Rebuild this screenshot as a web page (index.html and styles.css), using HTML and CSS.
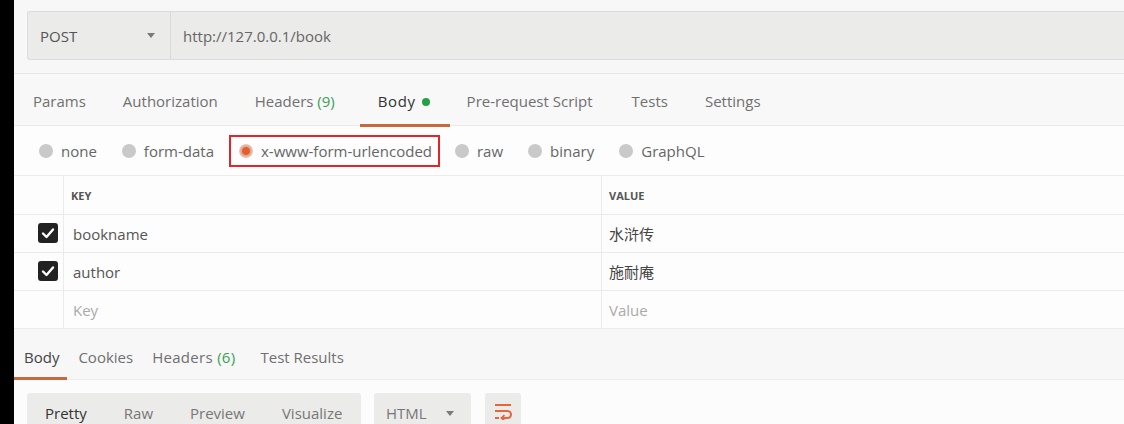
FILE: index.html
```html
<!DOCTYPE html>
<html>
<head>
<meta charset="utf-8">
<link rel="stylesheet" href="styles.css">
</head>
<body>
<div class="side"></div>
<div class="main">
  <div class="urlrow">
    <div class="urlbar">
      <div class="method"><span>POST</span><span class="caret"></span></div>
      <div class="url">http://127.0.0.1/book</div>
    </div>
  </div>
  <div class="tabs">
    <span class="tab">Params</span>
    <span class="tab">Authorization</span>
    <span class="tab">Headers <span class="green">(9)</span></span>
    <span class="tab active">Body<span class="dot"></span></span>
    <span class="tab">Pre-request Script</span>
    <span class="tab">Tests</span>
    <span class="tab">Settings</span>
  </div>
  <div class="types">
    <label class="type"><span class="radio"></span>none</label>
    <label class="type"><span class="radio"></span>form-data</label>
    <label class="type selected"><span class="radio on"></span>x-www-form-urlencoded</label>
    <label class="type"><span class="radio"></span>raw</label>
    <label class="type"><span class="radio"></span>binary</label>
    <label class="type"><span class="radio"></span>GraphQL</label>
  </div>
  <div class="table">
    <div class="row head">
      <div class="c0"></div>
      <div class="c1">KEY</div>
      <div class="c2">VALUE</div>
    </div>
    <div class="row">
      <div class="c0"><span class="check"><svg viewBox="0 0 20 20" width="20" height="20"><path d="M5 10.5 L8.5 14 L15 6.5" fill="none" stroke="#fff" stroke-width="2.4" stroke-linecap="round" stroke-linejoin="round"/></svg></span></div>
      <div class="c1">bookname</div>
      <div class="c2">水浒传</div>
    </div>
    <div class="row">
      <div class="c0"><span class="check"><svg viewBox="0 0 20 20" width="20" height="20"><path d="M5 10.5 L8.5 14 L15 6.5" fill="none" stroke="#fff" stroke-width="2.4" stroke-linecap="round" stroke-linejoin="round"/></svg></span></div>
      <div class="c1">author</div>
      <div class="c2">施耐庵</div>
    </div>
    <div class="row">
      <div class="c0"></div>
      <div class="c1 ph">Key</div>
      <div class="c2 ph">Value</div>
    </div>
  </div>
  <div class="rtabs">
    <span class="rtab active">Body</span>
    <span class="rtab">Cookies</span>
    <span class="rtab">Headers <span class="green">(6)</span></span>
    <span class="rtab">Test Results</span>
  </div>
  <div class="toolbar">
    <div class="modes">
      <span class="mode cur">Pretty</span>
      <span class="mode">Raw</span>
      <span class="mode">Preview</span>
      <span class="mode">Visualize</span>
    </div>
    <div class="fmt"><span>HTML</span><span class="caret"></span></div>
    <div class="wrap">
      <svg viewBox="0 0 20 18" width="20" height="18"><path d="M2 3 H18 M2 9 H14.5 A3.5 3.5 0 0 1 14.5 16 H10 M2 16 H6" fill="none" stroke="#e8643a" stroke-width="2"/><path d="M11.5 13.2 L8.5 16 L11.5 18.8" fill="none" stroke="#e8643a" stroke-width="1.8"/></svg>
    </div>
  </div>
</div>
</body>
</html>
```
FILE: styles.css
```css
* { box-sizing: border-box; }
html, body { margin: 0; padding: 0; }
body {
  width: 1124px;
  height: 424px;
  overflow: hidden;
  display: flex;
  background: #f7f7f7;
  font-family: "Open Sans", "Noto Sans CJK SC", sans-serif;
  font-size: 15px;
  color: #555;
}
.side { width: 14px; flex: none; background: #000; }
.main { flex: 1; min-width: 0; display: flex; flex-direction: column; }
.main > * { flex: none; }

.urlrow {
  height: 74px;
  padding: 11px 0 0 13px;
  border-bottom: 1px solid #e8e8e8;
  background: #f7f7f7;
}
.urlbar {
  height: 49px;
  display: flex;
  background: #ebebea;
  border: 1px solid #dcdcdc;
  border-right: none;
  border-radius: 3px 0 0 3px;
}
.method {
  width: 143px;
  flex: none;
  display: flex;
  align-items: center;
  justify-content: space-between;
  padding: 0 15px 0 12px;
  border-right: 1px solid #dadada;
  color: #555;
}
.caret {
  width: 0; height: 0;
  border-left: 4.5px solid transparent;
  border-right: 4.5px solid transparent;
  border-top: 5px solid #7a7a7a;
}
.url { display: flex; align-items: center; padding-left: 12px; color: #666; }

.tabs {
  height: 52px;
  display: flex;
  align-items: center;
  padding-left: 19px;
  background: #f8f8f8;
  border-bottom: 1px solid #e9e9e9;
}
.tab { margin-right: 37px; color: #707070; position: relative; height: 52px; line-height: 55px; white-space: nowrap; }
.tab.active { color: #333; padding-left: 6px; letter-spacing: 0.6px; }
.tab:nth-child(5) { margin-right: 39px; }
.tab.active::after {
  content: "";
  position: absolute;
  left: -12px; right: -20px; bottom: -1px;
  height: 3px;
  background: #c9683f;
}
.green { color: #3a9f55; }
.dot {
  display: inline-block;
  width: 8px; height: 8px;
  border-radius: 50%;
  background: #26a046;
  margin-left: 6px;
  vertical-align: 1px;
}

.types {
  height: 50px;
  display: flex;
  align-items: center;
  padding-left: 25px;
  background: #fdfdfd;
  border-bottom: 1px solid #ececec;
}
.type {
  display: flex;
  align-items: center;
  margin-right: 25px;
  color: #666;
  white-space: nowrap;
}
.radio {
  width: 14px; height: 14px;
  border-radius: 50%;
  background: #c9c9c9;
  margin-right: 8px;
}
.radio.on {
  background: radial-gradient(circle, #e55f2c 0 3.5px, #eba586 4.5px, #d9cfcb 7px);
}
.type.selected {
  border: 2px solid #e3242b;
  height: 32px;
  padding: 0 6px 0 8px;
  margin-left: -10px;
  margin-right: 15px;
}

.table { background: #fdfdfd; }
.row {
  display: flex;
  height: 38px;
  border-bottom: 1px solid #ebebeb;
}
.row.head { height: 39px; }
.c0 {
  width: 50px; flex: none;
  border-right: 1px solid #ebebeb;
  display: flex; align-items: center; justify-content: flex-end;
  padding-right: 5px;
}
.c1 {
  width: 538px; flex: none;
  border-right: 1px solid #ebebeb;
  display: flex; align-items: center;
  padding-left: 9px;
  color: #555;
}
.c2 { flex: 1; display: flex; align-items: center; padding-left: 7px; color: #444; }
.head .c1, .head .c2 { font-size: 11px; font-weight: 700; color: #555; }
.head .c1 { padding-left: 7px; }
.ph { color: #aaa; }
.check {
  width: 20px; height: 20px;
  border-radius: 3px;
  background: #222;
  display: block;
  margin-top: -1px;
}
.check svg { display: block; }

.rtabs {
  height: 51px;
  display: flex;
  align-items: center;
  padding-left: 10px;
  background: #f7f7f7;
  border-bottom: 1px solid #ebebeb;
}
.rtab { margin-right: 19px; color: #707070; height: 51px; line-height: 56px; position: relative; white-space: nowrap; }
.rtab:nth-child(3) { margin-right: 25px; letter-spacing: 0.3px; }
.rtab.active { color: #444; }
.rtab.active::after {
  content: "";
  position: absolute;
  left: -10px; right: -8px; bottom: 0px;
  height: 3px;
  background: #c9683f;
}

.toolbar {
  flex: 1 1 auto;
  display: flex;
  align-items: flex-start;
  padding: 13px 0 0 13px;
  background: #fcfcfc;
  gap: 13px;
}
.modes {
  width: 334px;
  height: 40px;
  display: flex;
  align-items: center;
  padding-left: 18px;
  background: #ebebea;
  border-radius: 3px;
}
.mode { margin-right: 37px; color: #777; }
.mode.cur { color: #333; }
.fmt {
  width: 97px; height: 40px;
  display: flex; align-items: center; justify-content: space-between;
  padding: 0 17px 0 12px;
  background: #ebebea;
  border-radius: 3px;
  color: #777;
}
.wrap {
  width: 36px; height: 40px;
  background: #ebebea;
  border-radius: 3px;
  display: flex; justify-content: center;
  padding-top: 9px;
  margin-left: 1px;
}
.wrap svg { display: block; }
```
